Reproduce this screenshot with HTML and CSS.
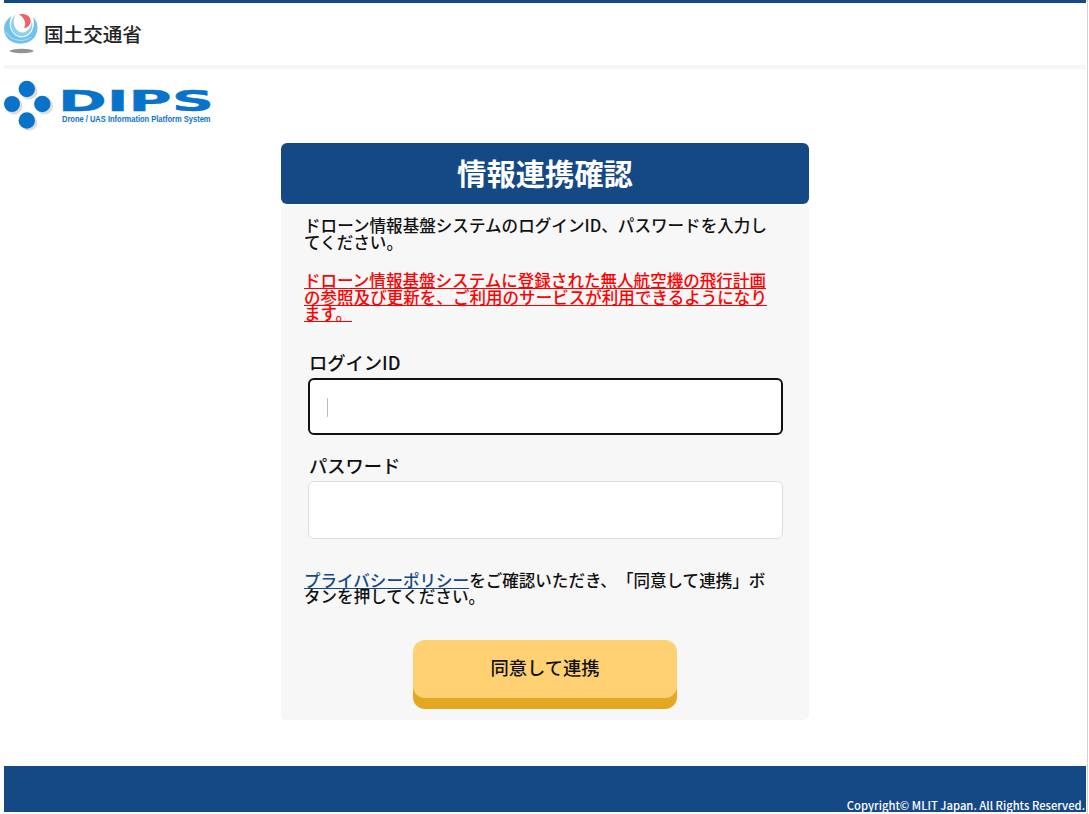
FILE: index.html
```html
<!DOCTYPE html>
<html lang="ja">
<head>
<meta charset="utf-8">
<title>情報連携確認</title>
<link rel="stylesheet" href="styles.css">
</head>
<body>
<div class="page">
  <header class="ministry">
    <svg class="ministry-mark" width="34" height="42" viewBox="0 0 34 42" aria-hidden="true">
      <path d="M8 3C-2 8-2 21 5 27C12 32 23 32 29 26C35 20 35 9 29 4C32 14 27 24 18 24C8 24 3 12 8 3Z" fill="#6fc3ea"/>
      <path d="M12 1.500C4 8 5 22 17 23.500C26 23.500 30 15 28 8C27 15 23 19.500 18 19.500C11 18.500 7 9 12 1.500Z" fill="#8fd0f0"/>
      <path d="M8.500 3C3 12 8 23 17 24C26 24 30.500 16 28.800 6" fill="none" stroke="#fff" stroke-width="1"/>
      <path d="M2 19C7 28 19 30 27 24" fill="none" stroke="#b5e0f5" stroke-width="1"/>
      <path d="M15 1.500C22-.5 28 4 26.500 10C25.500 13 23 15 20 15C23 10 20 4 15 1.500Z" fill="#ed626b"/>
      <ellipse cx="17.700" cy="38" rx="12" ry="2.200" fill="#929292"/>
    </svg>
    <span class="ministry-name">国土交通省</span>
  </header>
  <div class="brand">
    <svg width="212" height="62" viewBox="0 0 212 62" role="img">
      <g fill="#dcdcdc">
        <circle cx="25" cy="20" r="8.500"/><circle cx="10" cy="35" r="8.500"/>
        <circle cx="40.500" cy="35" r="8.500"/><circle cx="25" cy="51.500" r="8.300"/>
      </g>
      <g fill="#0873c9">
        <circle cx="22.800" cy="18" r="8.200"/><circle cx="8" cy="33" r="8"/>
        <circle cx="38.300" cy="33" r="8.200"/><circle cx="22.800" cy="49.500" r="8.200"/>
      </g>
      <text class="brand-name" x="54" y="40.300" textLength="156" lengthAdjust="spacingAndGlyphs">DIPS</text>
      <text class="brand-sub" x="58" y="50.800" textLength="148.500" lengthAdjust="spacingAndGlyphs">Drone / UAS Information Platform System</text>
    </svg>
  </div>
  <main class="card">
    <h1 class="title">情報連携確認</h1>
    <form class="panel">
      <p class="lead">ドローン情報基盤システムのログインID、パスワードを入力し<br>てください。</p>
      <p class="warning">ドローン情報基盤システムに登録された無人航空機の飛行計画<br>の参照及び更新を、ご利用のサービスが利用できるようになり<br>ます。</p>
      <label class="label" for="uid">ログインID</label>
      <div class="field field-active" id="uid"><i class="caret"></i></div>
      <label class="label" for="pw">パスワード</label>
      <div class="field" id="pw"></div>
      <p class="policy"><a class="link">プライバシーポリシー</a>をご確認いただき、「同意して連携」ボ<br>タンを押してください。</p>
      <button class="submit" type="button">同意して連携</button>
    </form>
  </main>
  <footer class="footer">Copyright© MLIT Japan. All Rights Reserved.</footer>
</div>
</body>
</html>
```
FILE: styles.css
```css
* { box-sizing: border-box; }
html { background: #fff; }
body {
  margin: 0;
  height: 814px;
  overflow: hidden;
  font-family: "Noto Sans CJK JP", sans-serif;
  font-weight: 500;
  text-spacing-trim: space-all;
  color: #111;
}
.page {
  display: flex;
  flex-direction: column;
  height: 814px;
  width: 1088px;
  padding: 0 1px 2px 4px;
  border-right: 1px solid #d2d2d2;
}
.ministry {
  display: flex;
  flex: none;
  height: 69px;
  border-top: 3px solid #154985;
  border-bottom: 4px solid #f6f6f6;
}
.ministry-mark { flex: none; margin-top: 10px; }
.ministry-name {
  margin: 16px 0 0 6px;
  font-size: 19.6px;
  line-height: 30px;
  color: #222;
}
.brand { flex: none; height: 74px; padding-top: 2px; }
.brand svg { display: block; }
.brand-name {
  font: bold 28.500px "DejaVu Sans", sans-serif;
  fill: #0873c9;
  stroke: #0873c9;
  stroke-width: .4px;
}
.brand-sub {
  font: bold 8.500px "Liberation Sans", sans-serif;
  fill: #0873c9;
}
.card { flex: none; width: 528px; margin-left: 277px; }
.title {
  height: 61px;
  margin: 0;
  border-radius: 6px;
  background: #154985;
  color: #fff;
  font-size: 29.3px;
  font-weight: 700;
  line-height: 59px;
  text-align: center;
}
.panel {
  display: flex;
  flex-direction: column;
  height: 515px;
  margin-top: 1px;
  padding: 12px 23px 0;
  border-radius: 5px;
  background: #f7f7f7;
}
.panel p {
  margin: 0;
  font-size: 16.520px;
  letter-spacing: .03px;
  line-height: 16.5px;
  white-space: nowrap;
}
.panel .lead { letter-spacing: .06px; }
.panel .warning {
  margin: 22px 0 26px;
  color: #f00;
  text-decoration: underline;
}
.label {
  height: 30px;
  margin-left: 5px;
  font-size: 18.3px;
  line-height: 28px;
}
.field {
  flex: none;
  width: 475px;
  height: 58px;
  margin: 0 0 33px 4px;
  border: 1px solid #ddd;
  border-radius: 6px;
  background: #fff;
}
.field-active {
  height: 57px;
  margin-bottom: 16px;
  padding: 18px 0 0 17px;
  border: 2px solid #111;
}
.caret { display: block; width: 1px; height: 19px; background: #bbb; }
.link { color: #154985; text-decoration: underline; }
.submit {
  flex: none;
  align-self: center;
  width: 264px;
  height: 58px;
  margin-top: 35px;
  padding: 0 0 4px;
  border: 0;
  border-radius: 12px;
  background: #ffd172;
  box-shadow: 0 11px 0 #e3a722;
  color: #111;
  font: 500 18.3px "Noto Sans CJK JP", sans-serif;
}
.footer {
  height: 46px;
  margin-top: auto;
  padding: 30px 1px 0 0;
  background: #154985;
  color: #fff;
  font-size: 11.25px;
  line-height: 18px;
  text-align: right;
}
```
